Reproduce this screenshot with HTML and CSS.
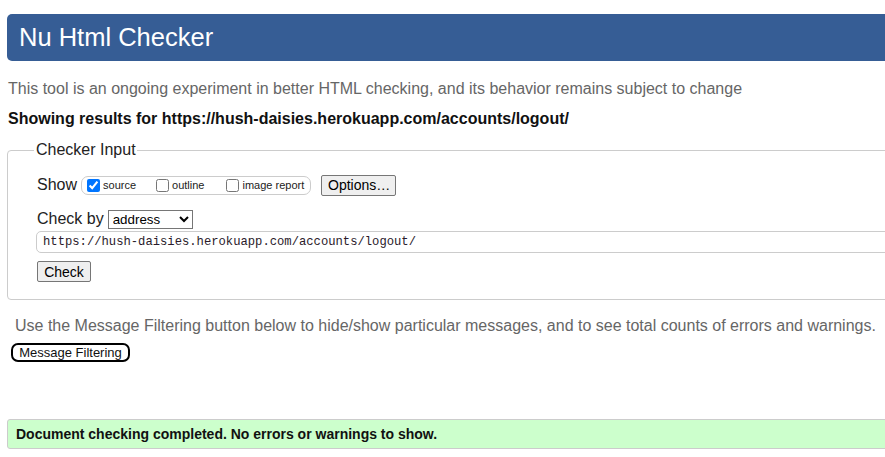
FILE: index.html
```html
<!DOCTYPE html>
<html lang="en">
<head>
<meta charset="utf-8">
<title>Nu Html Checker</title>
<link rel="stylesheet" href="styles.css">
</head>
<body>
<div class="page">
  <h1 class="title-bar">Nu Html Checker</h1>
  <p class="intro">This tool is an ongoing experiment in better HTML checking, and its behavior remains subject to change</p>
  <p class="showing">Showing results for https://hush-daisies.herokuapp.com/accounts/logout/</p>
  <fieldset class="checker">
    <legend class="checker-legend">Checker Input</legend>
    <div class="row show-row">
      <span class="label">Show</span>
      <span class="show-group">
        <label class="opt"><input type="checkbox" checked> source</label>
        <label class="opt opt-mid"><input type="checkbox"> outline</label>
        <label class="opt"><input type="checkbox"> image report</label>
      </span>
      <button class="btn options-btn" type="button">Options…</button>
    </div>
    <div class="row by-row">
      <span class="label">Check by</span>
      <select class="by-select"><option>address</option></select>
    </div>
    <input class="url" type="text" value="https://hush-daisies.herokuapp.com/accounts/logout/">
    <div class="row">
      <button class="btn check-btn" type="button">Check</button>
    </div>
  </fieldset>
  <p class="filter-note">Use the Message Filtering button below to hide/show particular messages, and to see total counts of errors and warnings.</p>
  <button class="filter-btn" type="button">Message Filtering</button>
  <div class="success">Document checking completed. No errors or warnings to show.</div>
</div>
</body>
</html>
```

FILE: styles.css
```css
html, body {
  margin: 0;
  padding: 0;
  overflow: hidden;
  background: #fff;
}
body {
  font-family: "Liberation Sans", Arial, sans-serif;
  color: #222;
}
.page {
  width: 1000px;
  padding: 14px 0 0 7px;
}
.title-bar {
  margin: 0;
  height: 47px;
  box-sizing: border-box;
  background: #365d95;
  color: #fff;
  font-weight: normal;
  font-size: 25.5px;
  line-height: 47px;
  padding-left: 12px;
  border-radius: 5px 0 0 5px;
}
.intro {
  margin: 18px 0 0 1px;
  font-size: 16px;
  line-height: 20px;
  color: #666;
}
.showing {
  margin: 10px 0 0 1px;
  font-size: 16px;
  line-height: 20px;
  font-weight: bold;
  color: #111;
}
.checker {
  margin: 12px 0 0 0;
  padding: 15px 0 17px 29px;
  border: 1px solid #ccc;
  border-radius: 4px;
  min-width: 0;
}
.checker-legend {
  margin-left: -3px;
  padding: 0 1px 0 2px;
  font-size: 16px;
  color: #222;
}
.row {
  display: flex;
  align-items: center;
}
.label {
  font-size: 16px;
}
.show-row {
  height: 22px;
}
.show-group {
  display: inline-flex;
  align-items: center;
  flex-shrink: 0;
  margin-left: 4px;
  height: 19px;
  box-sizing: border-box;
  border: 1px solid #ccc;
  border-radius: 7px;
  padding: 0 4px 0 5px;
  width: 230px;
  white-space: nowrap;
}
.opt {
  display: inline-flex;
  align-items: center;
  flex-shrink: 0;
  font-size: 11px;
  white-space: nowrap;
  margin-right: 20px;
}
.opt.opt-mid {
  margin-right: 22px;
}
.opt:last-child {
  margin-right: 0;
}
.opt input {
  margin: 0 3px 0 0;
  width: 13px;
  height: 13px;
}
.btn {
  font-family: "Liberation Sans", Arial, sans-serif;
  font-size: 14px;
  background: #efefef;
  border: 1px solid #767676;
  border-radius: 2px;
  color: #000;
  padding: 1px 6px;
}
.options-btn {
  margin-left: 10px;
  width: 75px;
  height: 21px;
}
.by-row {
  margin-top: 12px;
  height: 22px;
}
.by-select {
  margin-left: 4px;
  width: 85px;
  height: 19px;
  font-family: "Liberation Sans", Arial, sans-serif;
  font-size: 13.33px;
  border: 1px solid #767676;
  border-radius: 0;
  background: #fff;
  color: #000;
}
.url {
  display: block;
  margin: 1px 0 0 -1px;
  width: 900px;
  height: 22px;
  box-sizing: border-box;
  border: 1px solid #ccc;
  border-radius: 5px;
  padding: 0 6px;
  font-family: "Liberation Mono", "DejaVu Sans Mono", monospace;
  font-size: 12.2px;
  color: #2a1a2a;
}
.check-btn {
  margin-top: 8px;
  width: 54px;
  height: 21px;
}
.filter-note {
  margin: 16px 0 0 8px;
  font-size: 16px;
  line-height: 20px;
  color: #666;
}
.filter-btn {
  display: block;
  margin: 7px 0 0 4px;
  width: 119px;
  height: 19px;
  padding: 0;
  font-family: "Liberation Sans", Arial, sans-serif;
  font-size: 13px;
  background: #fff;
  color: #111;
  border: 2px solid #000;
  border-radius: 7px;
}
.success {
  margin-top: 57px;
  height: 30px;
  box-sizing: border-box;
  background: #ccffcc;
  border: 1px solid #ccc;
  border-radius: 3px 0 0 3px;
  padding-left: 8px;
  font-size: 14px;
  font-weight: bold;
  line-height: 28px;
  color: #111;
}
```
